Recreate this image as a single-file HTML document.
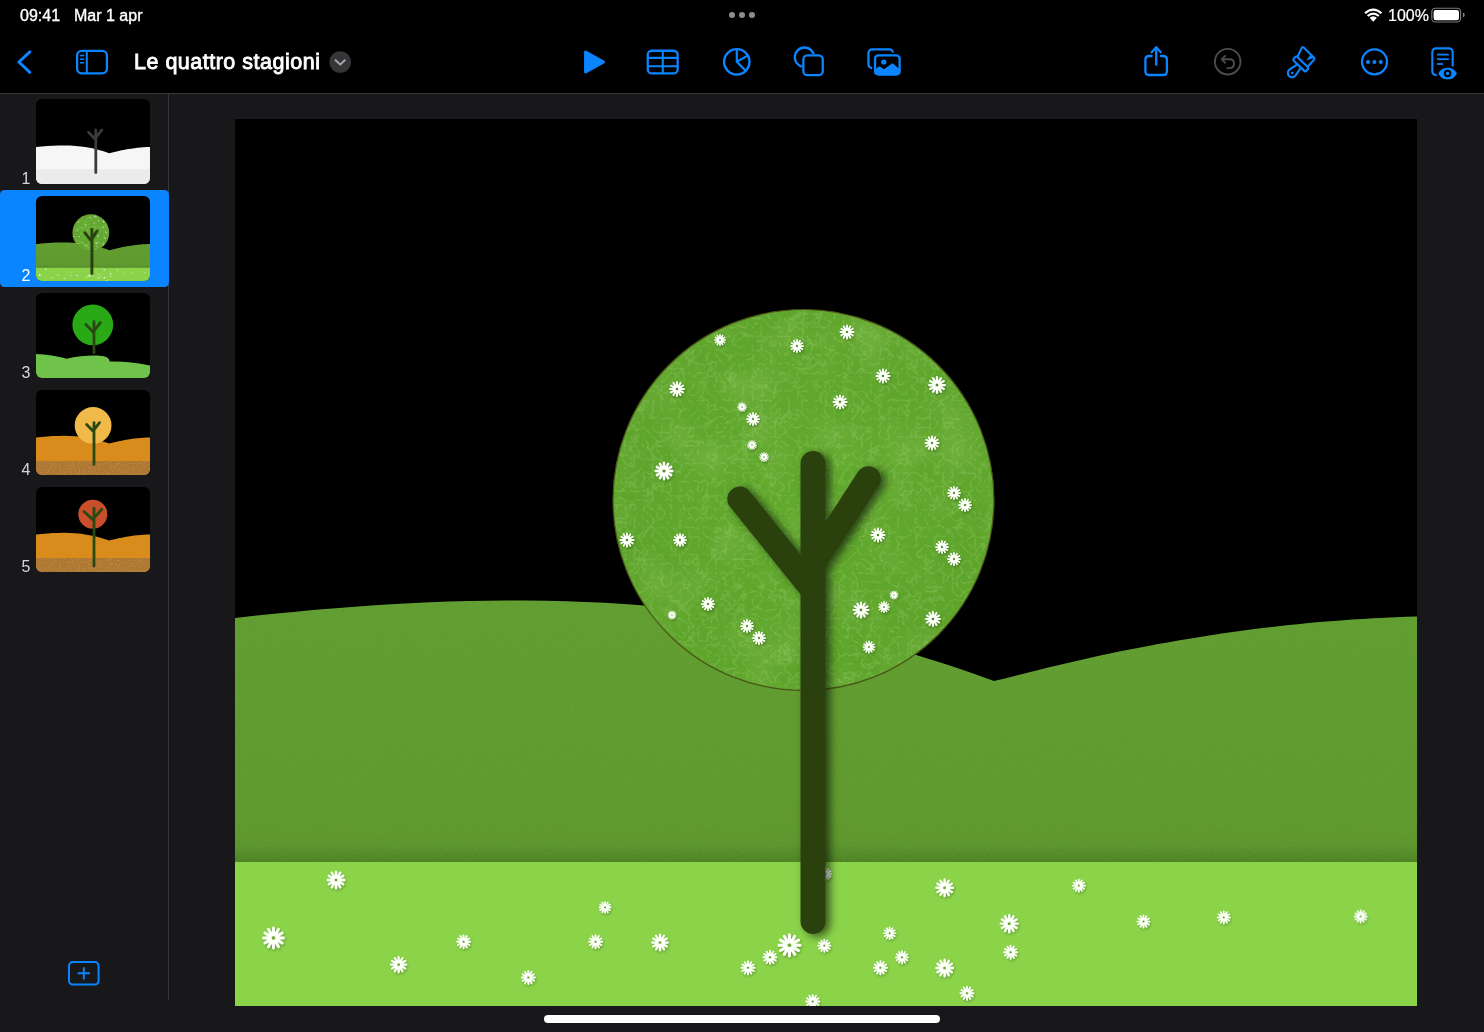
<!DOCTYPE html>
<html><head><meta charset="utf-8">
<style>
html,body{margin:0;padding:0;}
body{width:1484px;height:1032px;overflow:hidden;background:#18181a;position:relative;font-family:"Liberation Sans",sans-serif;-webkit-font-smoothing:antialiased;}
.st,#title,.num{will-change:transform;}
.abs{position:absolute;}
#top{left:0;top:0;width:1484px;height:93px;background:#000;}
#hline{left:0;top:93px;width:1484px;height:1px;background:#3a3a3c;}
#vline{left:168px;top:94px;width:1px;height:906px;background:#353537;}
.st{top:5px;color:#fff;font-size:16px;line-height:22px;font-weight:normal;-webkit-text-stroke:0.35px #fff;white-space:nowrap;}
#title{left:134px;top:48px;color:#fff;font-size:21.5px;line-height:28px;font-weight:normal;-webkit-text-stroke:0.85px #fff;letter-spacing:0.5px;white-space:nowrap;}
.thumb{width:114px;height:85px;border-radius:6px;overflow:hidden;}
.thumb svg{display:block;}
.num{left:16px;width:20px;text-align:center;font-size:16px;line-height:16px;}
.sel{left:0;top:190px;width:168.5px;height:97px;background:#0a84ff;border-radius:4.5px;}
.slide{position:absolute;left:235px;top:119px;display:block;}
#home{left:544px;top:1015px;width:396px;height:8px;border-radius:4px;background:#fff;}
</style></head><body>
<div id="top" class="abs"></div>
<svg class="abs" style="left:0;top:0" width="1484" height="93" viewBox="0 0 1484 93">
<defs>
<mask id="m_shape" maskUnits="userSpaceOnUse" x="780" y="40" width="60" height="50"><rect x="780" y="40" width="60" height="50" fill="#fff"/><rect x="802" y="54" width="22.2" height="22.5" rx="5" fill="#000"/></mask>
<mask id="m_media" maskUnits="userSpaceOnUse" x="850" y="40" width="60" height="50"><rect x="850" y="40" width="60" height="50" fill="#fff"/><rect x="872.2" y="52.4" width="30.4" height="25" rx="5" fill="#000"/></mask>
<mask id="m_doc" maskUnits="userSpaceOnUse" x="1420" y="40" width="50" height="50"><rect x="1420" y="40" width="50" height="50" fill="#fff"/><path d="M1436,73.6 C1439,66.6 1443.5,65.8 1447.6,65.8 C1451.7,65.8 1456.2,66.6 1459.2,73.6 C1456.2,80.6 1451.7,81.5 1447.6,81.5 C1443.5,81.5 1439,80.6 1436,73.6 Z" fill="#000"/></mask>
</defs>
<!-- status dots -->
<g fill="#8d8d8f"><circle cx="732" cy="15" r="3.05"/><circle cx="742" cy="15" r="3.05"/><circle cx="752" cy="15" r="3.05"/></g>
<!-- wifi -->
<g fill="#fff">
<path d="M1373.25,21.7 L1369.6,17.8 Q1373.25,14.6 1376.9,17.8 Z"/>
<path d="M1366.9,15.2 Q1373.25,9.6 1379.6,15.2 L1378.1,16.8 Q1373.25,12.6 1368.4,16.8 Z"/>
<path d="M1364.3,12.5 Q1373.25,4.6 1382.2,12.5 L1380.7,14.1 Q1373.25,7.6 1365.8,14.1 Z"/>
</g>
<!-- battery -->
<rect x="1431.8" y="8.2" width="28.8" height="13.8" rx="3.6" fill="none" stroke="#7c7c7e" stroke-width="1.1"/>
<rect x="1433.6" y="9.9" width="25.4" height="10.4" rx="2.2" fill="#fff"/>
<path d="M1462.8,12.6 Q1464.8,13 1464.8,14.9 Q1464.8,16.8 1462.8,17.2 Z" fill="#7c7c7e"/>
<g fill="none" stroke="#0a84ff" stroke-width="2.3" stroke-linecap="round" stroke-linejoin="round">
<!-- back chevron -->
<polyline points="29.8,51.8 18.9,62 29.8,72.3" stroke-width="3"/>
<!-- sidebar -->
<rect x="77.1" y="50.9" width="29.8" height="22.4" rx="4.5"/>
<line x1="86.8" y1="51" x2="86.8" y2="73.3" stroke-width="2"/>
<g stroke-width="1.5" stroke-linecap="butt"><line x1="80" y1="55.6" x2="84.2" y2="55.6"/><line x1="80" y1="59.2" x2="84.2" y2="59.2"/><line x1="80" y1="62.8" x2="84.2" y2="62.8"/></g>
<!-- table -->
<rect x="647.75" y="50.75" width="29.9" height="22.7" rx="4"/>
<line x1="648" y1="57.9" x2="677.5" y2="57.9" stroke-width="2.1"/>
<line x1="648" y1="66.2" x2="677.5" y2="66.2" stroke-width="2.1"/>
<line x1="662.8" y1="51" x2="662.8" y2="73.3" stroke-width="2.1"/>
<!-- chart -->
<circle cx="736.8" cy="61.8" r="12.7" stroke-width="2.4"/>
<polyline points="736.8,49.3 736.8,61.8 747.6,55.6" stroke-width="2.2"/>
<line x1="736.8" y1="61.8" x2="745.6" y2="70.6" stroke-width="2.2"/>
<!-- shape -->
<circle cx="804.5" cy="57.2" r="9.7" mask="url(#m_shape)"/>
<rect x="803.35" y="55.35" width="19.4" height="19.8" rx="4"/>
<!-- media -->
<rect x="868.45" y="49.45" width="24.6" height="18.6" rx="3.5" mask="url(#m_media)"/>
<rect x="875.05" y="55.35" width="24.6" height="19.2" rx="3.5"/>
<!-- share -->
<path d="M1151.6,56 L1149.2,56 Q1145.4,56 1145.4,59.8 L1145.4,71.2 Q1145.4,75 1149.2,75 L1163.1,75 Q1166.9,75 1166.9,71.2 L1166.9,59.8 Q1166.9,56 1163.1,56 L1160.8,56"/>
<line x1="1156.2" y1="47.6" x2="1156.2" y2="64.8"/>
<polyline points="1151.6,52.2 1156.2,47.4 1160.8,52.2"/>
<!-- undo -->
<g stroke="#4c4c4e" stroke-width="1.9">
<circle cx="1227.7" cy="61.7" r="12.8"/>
<polyline points="1225.2,55.8 1221.7,59.3 1225.2,62.8"/>
<path d="M1222.2,59.3 L1229.5,59.3 Q1234,59.3 1234,63.7 Q1234,68.1 1229.5,68.1 L1227.2,68.1"/>
</g>
<!-- more -->
<circle cx="1374.5" cy="61.8" r="12.5"/>
<!-- doc -->
<rect x="1432.3" y="48.4" width="20.4" height="26.6" rx="3.5" stroke-width="2.1" mask="url(#m_doc)"/>
<g stroke-width="1.8" stroke-linecap="butt"><line x1="1437.1" y1="54.6" x2="1448.8" y2="54.6"/><line x1="1437.1" y1="59.2" x2="1448.8" y2="59.2"/><line x1="1437.1" y1="64" x2="1443" y2="64"/></g>
<!-- brush -->
<g transform="translate(1302,62) rotate(44)" stroke-width="2.1">
<path d="M-7,-0.8 L-10,-10 Q-10.6,-11.6 -8.9,-11.6 L5.4,-11.6 Q7,-11.6 7.1,-10 L7.4,-0.8"/>
<rect x="-8.3" y="-0.4" width="17.6" height="5.2" rx="1.5"/>
<path d="M-1.7,4.9 L-3.5,13.1 A4.3,4.3 0 1 0 4.5,13.1 L3.2,4.9"/>
</g>
</g>
<g fill="#0a84ff">
<path d="M584.7,52.2 Q584.7,50.6 586.1,51.3 L603.6,61 Q605,62 603.6,63 L586.1,72.7 Q584.7,73.4 584.7,71.8 Z" stroke="#0a84ff" stroke-width="1.2" stroke-linejoin="round"/>
<circle cx="1368" cy="62" r="2.05"/><circle cx="1374.4" cy="62" r="2.05"/><circle cx="1380.8" cy="62" r="2.05"/>
<circle cx="883.8" cy="62" r="2.6"/>
<path d="M874.5,74.2 L874.5,69.8 L879.3,66.2 L884,69.3 L892.4,63.2 L900.2,69.5 L900.2,74.2 Z"/>
<path d="M1438.3,73.6 C1441,68.4 1444.5,67.8 1447.6,67.8 C1450.7,67.8 1454.2,68.4 1456.9,73.6 C1454.2,78.8 1450.7,79.5 1447.6,79.5 C1444.5,79.5 1441,78.8 1438.3,73.6 Z"/>
<g transform="translate(1302,62) rotate(44)"><circle cx="0.5" cy="14.6" r="1.35"/><path d="M1,-11 L6,-11.6 L2.1,-4 Z"/></g>
</g>
<circle cx="1447.6" cy="73.5" r="3.7" fill="#000"/><circle cx="1447.6" cy="73.5" r="1.7" fill="#0a84ff"/>
<!-- dropdown -->
<circle cx="340.2" cy="62" r="10.8" fill="#363638"/>
<polyline points="335.6,60.2 340.2,64.6 344.8,60.2" fill="none" stroke="#a9a9ae" stroke-width="1.9" stroke-linecap="round" stroke-linejoin="round"/>
</svg>
<div class="abs st" style="left:20px">09:41</div>
<div class="abs st" style="left:74px">Mar 1 apr</div>
<div class="abs st" style="left:1388px;-webkit-text-stroke:0.2px #fff">100%</div>
<div id="title" class="abs">Le quattro stagioni</div>
<div id="hline" class="abs"></div>
<div id="vline" class="abs"></div>
<svg id="mainsvg" class="slide" width="1182" height="887" viewBox="0 0 1182 887">
<defs>
<symbol id="fl" viewBox="-50 -50 100 100" overflow="visible">
<mask id="flm" maskUnits="userSpaceOnUse" x="-60" y="-60" width="120" height="120"><rect x="-60" y="-60" width="120" height="120" fill="#fff"/><circle r="8.5" fill="#000"/></mask>
<g mask="url(#flm)"><circle r="27" fill="#fdfffa"/><path d="M0.00,-24.00 L0.00,-43.50 M12.00,-20.78 L21.75,-37.67 M20.78,-12.00 L37.67,-21.75 M24.00,0.00 L43.50,0.00 M20.78,12.00 L37.67,21.75 M12.00,20.78 L21.75,37.67 M0.00,24.00 L0.00,43.50 M-12.00,20.78 L-21.75,37.67 M-20.78,12.00 L-37.67,21.75 M-24.00,0.00 L-43.50,0.00 M-20.78,-12.00 L-37.67,-21.75 M-12.00,-20.78 L-21.75,-37.67" stroke="#fdfffa" stroke-width="12.5" stroke-linecap="round"/></g>
</symbol>
<filter id="fsh" x="-40%" y="-40%" width="180%" height="180%"><feDropShadow dx="1" dy="1.6" stdDeviation="1.3" flood-color="#000" flood-opacity="0.28"/></filter>
<filter id="tsh" x="-30%" y="-10%" width="160%" height="120%"><feDropShadow dx="4.5" dy="2.5" stdDeviation="4" flood-color="#000" flood-opacity="0.6"/></filter>
<filter id="tex" x="0" y="0" width="100%" height="100%"><feTurbulence type="turbulence" baseFrequency="0.11" numOctaves="3" seed="7"/><feColorMatrix values="0 0 0 0 0.55  0 0 0 0 0.85  0 0 0 0 0.40  -3.5 0 0 0 0.85"/><feGaussianBlur stdDeviation="0.4"/><feComposite in2="SourceGraphic" operator="in"/></filter>
<filter id="tex2" x="0" y="0" width="100%" height="100%"><feTurbulence type="fractalNoise" baseFrequency="0.02" numOctaves="2" seed="11"/><feColorMatrix values="0 0 0 0 0.30  0 0 0 0 0.55  0 0 0 0 0.12  0 0 0 1.4 -0.62"/><feComposite in2="SourceGraphic" operator="in"/></filter>
<filter id="grain" x="0" y="0" width="100%" height="100%"><feTurbulence type="fractalNoise" baseFrequency="0.5" numOctaves="2" seed="3"/><feColorMatrix values="0 0 0 0 0.25  0 0 0 0 0.45  0 0 0 0 0.10  0 0 0 0.9 -0.3"/><feComposite in2="SourceGraphic" operator="in"/></filter>
<linearGradient id="hillg" gradientUnits="userSpaceOnUse" x1="0" y1="480" x2="0" y2="743"><stop offset="0" stop-color="#609d30"/><stop offset="0.85" stop-color="#5e992e"/><stop offset="0.935" stop-color="#5b952c"/><stop offset="1" stop-color="#4c8224"/></linearGradient>
<radialGradient id="canog" cx="0.5" cy="0.45" r="0.6"><stop offset="0" stop-color="#62aa2e"/><stop offset="1" stop-color="#5ea42b"/></radialGradient>
</defs>
<g id="s2">
<rect width="1182" height="887" fill="#000"/>
<path d="M0.0,498.9 L19.5,496.8 L38.9,494.8 L58.4,492.9 L77.8,491.1 L97.3,489.4 L116.8,487.9 L136.2,486.5 L155.7,485.3 L175.2,484.3 L194.6,483.3 L214.1,482.6 L233.5,482.1 L253.0,481.7 L272.5,481.5 L291.9,481.5 L311.4,481.8 L330.8,482.2 L350.3,482.9 L369.8,483.8 L389.2,485.0 L408.7,486.4 L428.2,488.0 L447.6,489.9 L467.1,492.1 L486.5,494.5 L506.0,497.3 L525.5,500.3 L544.9,503.6 L564.4,507.3 L583.8,511.2 L603.3,515.5 L622.8,520.1 L642.2,525.0 L661.7,530.3 L681.2,535.9 L700.6,541.9 L720.1,548.2 L739.5,554.9 L759.0,562.0 L769.8,559.6 L780.7,556.7 L791.5,553.9 L802.4,551.2 L813.2,548.5 L824.1,545.9 L834.9,543.4 L845.8,540.9 L856.6,538.5 L867.5,536.1 L878.3,533.8 L889.2,531.6 L900.0,529.4 L910.8,527.4 L921.7,525.3 L932.5,523.4 L943.4,521.5 L954.2,519.7 L965.1,517.9 L975.9,516.2 L986.8,514.6 L997.6,513.0 L1008.5,511.6 L1019.3,510.1 L1030.2,508.8 L1041.0,507.5 L1051.8,506.3 L1062.7,505.2 L1073.5,504.1 L1084.4,503.1 L1095.2,502.2 L1106.1,501.4 L1116.9,500.6 L1127.8,499.9 L1138.6,499.3 L1149.5,498.7 L1160.3,498.2 L1171.2,497.8 L1182.0,497.5 L1182,887 L0,887 Z" fill="url(#hillg)"/>
<path d="M0.0,498.9 L19.5,496.8 L38.9,494.8 L58.4,492.9 L77.8,491.1 L97.3,489.4 L116.8,487.9 L136.2,486.5 L155.7,485.3 L175.2,484.3 L194.6,483.3 L214.1,482.6 L233.5,482.1 L253.0,481.7 L272.5,481.5 L291.9,481.5 L311.4,481.8 L330.8,482.2 L350.3,482.9 L369.8,483.8 L389.2,485.0 L408.7,486.4 L428.2,488.0 L447.6,489.9 L467.1,492.1 L486.5,494.5 L506.0,497.3 L525.5,500.3 L544.9,503.6 L564.4,507.3 L583.8,511.2 L603.3,515.5 L622.8,520.1 L642.2,525.0 L661.7,530.3 L681.2,535.9 L700.6,541.9 L720.1,548.2 L739.5,554.9 L759.0,562.0 L769.8,559.6 L780.7,556.7 L791.5,553.9 L802.4,551.2 L813.2,548.5 L824.1,545.9 L834.9,543.4 L845.8,540.9 L856.6,538.5 L867.5,536.1 L878.3,533.8 L889.2,531.6 L900.0,529.4 L910.8,527.4 L921.7,525.3 L932.5,523.4 L943.4,521.5 L954.2,519.7 L965.1,517.9 L975.9,516.2 L986.8,514.6 L997.6,513.0 L1008.5,511.6 L1019.3,510.1 L1030.2,508.8 L1041.0,507.5 L1051.8,506.3 L1062.7,505.2 L1073.5,504.1 L1084.4,503.1 L1095.2,502.2 L1106.1,501.4 L1116.9,500.6 L1127.8,499.9 L1138.6,499.3 L1149.5,498.7 L1160.3,498.2 L1171.2,497.8 L1182.0,497.5 L1182,887 L0,887 Z" fill="#000" filter="url(#grain)" opacity="0.35"/>
<rect y="743" width="1182" height="144" fill="#8bd44a"/>
<g>
<circle cx="568.5" cy="381" r="190.5" fill="url(#canog)" stroke="#4a5518" stroke-width="1.2"/>
<circle cx="568.5" cy="381" r="189.5" fill="#000" filter="url(#tex2)" opacity="0.5"/>
<circle cx="568.5" cy="381" r="189.5" fill="#000" filter="url(#tex)" opacity="0.3"/>
</g>
<g filter="url(#fsh)">
<use href="#fl" x="479.0" y="215.0" width="12" height="12"/>
<use href="#fl" x="555.0" y="220.0" width="14" height="14"/>
<use href="#fl" x="604.5" y="205.5" width="15" height="15"/>
<use href="#fl" x="640.5" y="249.5" width="15" height="15"/>
<use href="#fl" x="693.0" y="257.0" width="18" height="18"/>
<use href="#fl" x="434.0" y="262.0" width="16" height="16"/>
<use href="#fl" x="597.5" y="275.5" width="15" height="15"/>
<use href="#fl" x="502.0" y="283.0" width="10" height="10"/>
<use href="#fl" x="511.0" y="293.0" width="14" height="14"/>
<use href="#fl" x="689.5" y="316.5" width="15" height="15"/>
<use href="#fl" x="512.0" y="321.0" width="10" height="10"/>
<use href="#fl" x="524.0" y="333.0" width="10" height="10"/>
<use href="#fl" x="419.5" y="342.5" width="19" height="19"/>
<use href="#fl" x="712.0" y="367.0" width="14" height="14"/>
<use href="#fl" x="723.0" y="379.0" width="14" height="14"/>
<use href="#fl" x="384.5" y="413.5" width="15" height="15"/>
<use href="#fl" x="438.0" y="414.0" width="14" height="14"/>
<use href="#fl" x="635.5" y="408.5" width="15" height="15"/>
<use href="#fl" x="700.0" y="421.0" width="14" height="14"/>
<use href="#fl" x="712.0" y="433.0" width="14" height="14"/>
<use href="#fl" x="654.5" y="471.5" width="9" height="9"/>
<use href="#fl" x="643.0" y="482.0" width="12" height="12"/>
<use href="#fl" x="617.5" y="482.5" width="17" height="17"/>
<use href="#fl" x="466.0" y="478.0" width="14" height="14"/>
<use href="#fl" x="432.5" y="491.5" width="9" height="9"/>
<use href="#fl" x="505.0" y="500.0" width="14" height="14"/>
<use href="#fl" x="517.0" y="512.0" width="14" height="14"/>
<use href="#fl" x="690.0" y="492.0" width="16" height="16"/>
<use href="#fl" x="627.5" y="521.5" width="13" height="13"/>
<use href="#fl" x="91.5" y="751.5" width="19" height="19"/>
<use href="#fl" x="27.0" y="807.5" width="23" height="23"/>
<use href="#fl" x="154.9" y="836.9" width="17.5" height="17.5"/>
<use href="#fl" x="221.1" y="815.2" width="15" height="15"/>
<use href="#fl" x="285.8" y="851.0" width="15" height="15"/>
<use href="#fl" x="363.5" y="781.9" width="13" height="13"/>
<use href="#fl" x="353.1" y="815.2" width="15" height="15"/>
<use href="#fl" x="416.0" y="814.5" width="18" height="18"/>
<use href="#fl" x="505.5" y="841.3" width="15" height="15"/>
<use href="#fl" x="527.5" y="830.8" width="15" height="15"/>
<use href="#fl" x="542.5" y="814.3" width="24" height="24"/>
<use href="#fl" x="582.3" y="819.7" width="14" height="14"/>
<use href="#fl" x="570.2" y="875.0" width="15" height="15"/>
<use href="#fl" x="700.1" y="759.3" width="19" height="19"/>
<use href="#fl" x="647.9" y="807.5" width="13.5" height="13.5"/>
<use href="#fl" x="660.0" y="831.3" width="14" height="14"/>
<use href="#fl" x="637.9" y="841.3" width="15" height="15"/>
<use href="#fl" x="700.1" y="839.5" width="19" height="19"/>
<use href="#fl" x="724.5" y="866.7" width="15" height="15"/>
<use href="#fl" x="764.5" y="794.9" width="19.5" height="19.5"/>
<use href="#fl" x="768.1" y="825.7" width="15" height="15"/>
<use href="#fl" x="836.8" y="759.6" width="14" height="14"/>
<use href="#fl" x="901.5" y="795.5" width="14" height="14"/>
<use href="#fl" x="981.8" y="791.4" width="14" height="14"/>
<use href="#fl" x="1118.7" y="790.3" width="14" height="14"/>
<use href="#fl" x="584.0" y="748.5" width="13" height="13"/>
</g>
<g filter="url(#tsh)" stroke="#293f11" stroke-width="25" stroke-linecap="round" fill="none">
<path d="M578,344.5 L578,802.5 M504.8,380 L578,471 M633.4,359.8 L578,445"/>
</g>
</g>
</svg>
<div class="abs sel"></div>
<svg width="0" height="0" style="position:absolute"><defs><filter id="tgr" x="0" y="0" width="100%" height="100%"><feTurbulence type="fractalNoise" baseFrequency="0.9" numOctaves="2" seed="5"/><feColorMatrix values="0 0 0 0 0.88  0 0 0 0 0.70  0 0 0 0 0.40  0 0 0 2.2 -1.0"/><feComposite in2="SourceGraphic" operator="in"/></filter></defs></svg>
<div class="abs thumb" style="left:36px;top:99px"><svg width="114" height="85" viewBox="0 0 114 85"><rect width="114" height="85" fill="#000"/><path d="M0.00,48.12 L5.63,47.54 L11.26,47.06 L16.89,46.70 L22.52,46.49 L28.16,46.44 L33.79,46.58 L39.42,46.91 L45.05,47.46 L50.68,48.25 L56.31,49.30 L61.94,50.63 L67.57,52.26 L73.20,54.21 L76.34,53.42 L79.48,52.65 L82.62,51.93 L85.76,51.27 L88.89,50.67 L92.03,50.12 L95.17,49.63 L98.31,49.20 L101.45,48.83 L104.59,48.53 L107.72,48.28 L110.86,48.10 L114.00,47.98 L114,85 L0,85 Z" fill="#f6f6f6"/><rect y="70.3" width="114" height="14.7" fill="#ebebeb"/><g stroke="#3b3b3b" stroke-width="2.8" stroke-linecap="round" fill="none"><path d="M59.8,30.799999999999997 L59.8,73.5 M52.5,33.3 L59.8,40.7 M65.8,31.0 L59.8,38.6"/></g></svg></div><div class="abs num" style="top:170.5px;color:#d6d6d8">1</div>
<div class="abs thumb" style="left:36px;top:196px"><svg width="114" height="85" viewBox="0 0 114 85"><use href="#s2" transform="scale(0.096447)"/></svg></div><div class="abs num" style="top:267.5px;color:#fff">2</div>
<div class="abs thumb" style="left:36px;top:293px"><svg width="114" height="85" viewBox="0 0 114 85"><rect width="114" height="85" fill="#000"/><circle cx="56.8" cy="31.8" r="20.4" fill="#2aa917"/><g stroke="#2c4716" stroke-width="2.8" stroke-linecap="round" fill="none"><path d="M58,28.599999999999998 L58,59.800000000000004 M49.8,31.4 L58,40.0 M64.4,29.6 L58,38.0"/></g><path d="M0,61 C10,61.3 22,63 30.4,65.8 C40,63.6 50,62.6 58,62.6 C66,62.6 72,63.6 73,66.5 L73.8,68.6 C86,68.2 100,69.6 114,72.4 L114,85 L0,85 Z" fill="#6fc34a"/></svg></div><div class="abs num" style="top:364.5px;color:#d6d6d8">3</div>
<div class="abs thumb" style="left:36px;top:390px"><svg width="114" height="85" viewBox="0 0 114 85"><rect width="114" height="85" fill="#000"/><path d="M0.00,47.52 L5.63,46.94 L11.26,46.46 L16.89,46.10 L22.52,45.89 L28.16,45.84 L33.79,45.98 L39.42,46.31 L45.05,46.86 L50.68,47.65 L56.31,48.70 L61.94,50.03 L67.57,51.66 L73.20,53.61 L76.34,52.82 L79.48,52.05 L82.62,51.33 L85.76,50.67 L88.89,50.07 L92.03,49.52 L95.17,49.03 L98.31,48.60 L101.45,48.23 L104.59,47.93 L107.72,47.68 L110.86,47.50 L114.00,47.38 L114,85 L0,85 Z" fill="#d98c1c"/><rect y="71" width="114" height="14" fill="#ad7630"/><rect y="71" width="114" height="14" fill="#000" filter="url(#tgr)" opacity="0.3"/><circle cx="57.1" cy="35.4" r="18.4" fill="#f0b949"/><g stroke="#294913" stroke-width="2.8" stroke-linecap="round" fill="none"><path d="M58,32.7 L58,74.5 M50.6,34.5 L58,41.9 M63.5,32.7 L58,39.8"/></g></svg></div><div class="abs num" style="top:461.5px;color:#d6d6d8">4</div>
<div class="abs thumb" style="left:36px;top:487px"><svg width="114" height="85" viewBox="0 0 114 85"><rect width="114" height="85" fill="#000"/><path d="M0.00,47.52 L5.63,46.94 L11.26,46.46 L16.89,46.10 L22.52,45.89 L28.16,45.84 L33.79,45.98 L39.42,46.31 L45.05,46.86 L50.68,47.65 L56.31,48.70 L61.94,50.03 L67.57,51.66 L73.20,53.61 L76.34,52.82 L79.48,52.05 L82.62,51.33 L85.76,50.67 L88.89,50.07 L92.03,49.52 L95.17,49.03 L98.31,48.60 L101.45,48.23 L104.59,47.93 L107.72,47.68 L110.86,47.50 L114.00,47.38 L114,85 L0,85 Z" fill="#d98c1c"/><rect y="71" width="114" height="14" fill="#ad7630"/><rect y="71" width="114" height="14" fill="#000" filter="url(#tgr)" opacity="0.3"/><circle cx="56.8" cy="27.2" r="14.5" fill="#c94f2b"/><g stroke="#294913" stroke-width="2.8" stroke-linecap="round" fill="none"><path d="M58,21.2 L58,79.1 M48.0,24.5 L58,33.6 M65.8,22.2 L58,31.0"/></g></svg></div><div class="abs num" style="top:558.5px;color:#d6d6d8">5</div>
<svg class="abs" style="left:60px;top:955px" width="48" height="40" viewBox="60 955 48 40"><g fill="none" stroke="#0a84ff"><rect x="69" y="962" width="29.6" height="22.6" rx="4" stroke-width="2"/><path d="M83.8,967.2 V979.4 M77.7,973.3 H89.9" stroke-width="1.9"/></g></svg>
<div id="home" class="abs"></div>
</body></html>
